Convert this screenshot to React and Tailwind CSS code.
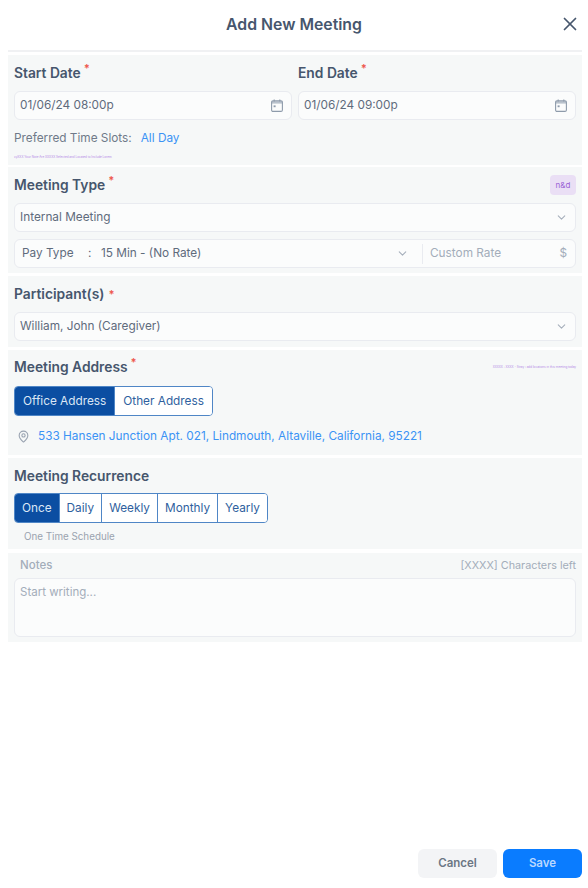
import React from 'react';
import { X, ChevronDown, MapPin } from 'lucide-react';

const font = { fontFamily: 'Inter, sans-serif' };

const Label = ({ children, dotClass = '-mt-px ml-[3px]' }) => (
  <div className="flex items-start text-[13.8px] leading-[18px] font-semibold text-[#46566d]">
    <span>{children}</span>
    <span className={`text-[11px] font-bold text-[#ee5a50] leading-none ${dotClass}`}>*</span>
  </div>
);

const CalendarIcon = () => (
  <svg width="12" height="13" viewBox="0 0 12 13" fill="none" className="text-[#8e9bab]">
    <rect x="0.6" y="1.8" width="10.8" height="10.6" rx="1.4" stroke="currentColor" strokeWidth="1.1" />
    <rect x="0.6" y="2" width="10.8" height="2.6" fill="currentColor" opacity="0.6" />
    <path d="M3.2 0.4v2M8.8 0.4v2" stroke="currentColor" strokeWidth="1.1" />
    <rect x="2.6" y="6.4" width="2" height="1.8" fill="currentColor" />
  </svg>
);

const DateInput = ({ value }) => (
  <div className="h-[29px] flex items-center justify-between pl-[5px] pr-[8px] bg-[#fbfcfc] border border-[#e9ebf0] rounded-md text-[11.8px] text-[#5f6b7c]">
    <span className="pt-px">{value}</span>
    <CalendarIcon />
  </div>
);

const SelectBox = ({ value }) => (
  <div className="h-[29px] flex items-center justify-between pl-[5px] pr-[7px] bg-[#fbfcfc] border border-[#e9ebf0] rounded-md text-[11.8px] text-[#5f6b7c]">
    <span className="pt-px">{value}</span>
    <ChevronDown size={13} className="text-[#a6afbb]" />
  </div>
);

const Segments = ({ items, padClass = 'px-[7px]' }) => (
  <div className="flex w-fit h-[30px] border border-[#4f86c6] rounded-[4px] overflow-hidden text-[11.8px]">
    {items.map((item, i) => (
      <div
        key={item}
        className={`flex items-center pt-px ${padClass} ${i === 0 ? 'bg-[#0b4ea2] text-[#dbe7f6]' : 'bg-white text-[#2f5f9e] border-l border-[#4f86c6]'}`}
      >
        {item}
      </div>
    ))}
  </div>
);

export default function App() {
  return (
    <div className="h-[888px] w-[588px] flex flex-col bg-white" style={font}>
      <div className="h-[50px] flex items-center justify-center relative shrink-0">
        <h1 className="text-[15.8px] font-semibold text-[#46566d]">Add New Meeting</h1>
        <X size={22} strokeWidth={1.9} className="absolute right-[7px] top-[13px] text-[#46566d]" />
      </div>
      <div className="ml-2 mr-[6px] h-[2px] bg-[#f0f1f3] shrink-0" />

      <div className="ml-2 mr-[6px] mt-[3px] flex flex-col gap-[2px]">
        {/* dates */}
        <section className="h-[110px] bg-[#f6f8f8] px-[6px] pt-[9px]">
          <div className="flex gap-[6px]">
            <div className="flex-1 flex flex-col gap-[9px]">
              <Label>Start Date</Label>
              <DateInput value="01/06/24 08:00p" />
            </div>
            <div className="flex-1 flex flex-col gap-[9px]">
              <Label>End Date</Label>
              <DateInput value="01/06/24 09:00p" />
            </div>
          </div>
          <div className="mt-[10px] flex gap-[9px] text-[11.8px] leading-[16px]">
            <span className="text-[#6f7a89]">Preferred Time Slots:</span>
            <span className="text-[#3b93f5]">All Day</span>
          </div>
          <div className="mt-[9px] text-[3px] leading-[4px] text-[#b58ae6]">
            xyXXX Your Note Are XXXXX Selected and Located to Include Lorem
          </div>
        </section>

        {/* type */}
        <section className="h-[106px] bg-[#f6f8f8] px-[6px] pt-[8px]">
          <div className="flex items-center justify-between h-[20px]">
            <Label>Meeting Type</Label>
            <div className="w-[26px] h-[20px] flex items-center justify-center rounded bg-[#eadff5] text-[8px] text-[#9a5fd6]">
              n&amp;d
            </div>
          </div>
          <div className="mt-[8px] flex flex-col gap-[7px]">
            <SelectBox value="Internal Meeting" />
            <div className="h-[29px] flex items-center bg-[#fbfcfc] border border-[#e9ebf0] rounded-md text-[11.8px] text-[#5f6b7c]">
              <div className="w-[407px] flex items-center justify-between pl-[7px] pr-[13px]">
                <div className="flex pt-px">
                  <span className="w-[66px]">Pay Type</span>
                  <span className="w-[13px]">:</span>
                  <span>15 Min - (No Rate)</span>
                </div>
                <ChevronDown size={13} className="text-[#a6afbb]" />
              </div>
              <div className="flex-1 h-[20px] flex items-center justify-between border-l border-[#e9ebf0] pl-[7px] pr-[8px] text-[#a3adba]">
                <span className="pt-px">Custom Rate</span>
                <span className="pt-px">$</span>
              </div>
            </div>
          </div>
        </section>

        {/* participants */}
        <section className="h-[71px] bg-[#f6f8f8] px-[6px] pt-[9px] mt-[1px]">
          <Label dotClass="ml-[4px] mt-[4px]">Participant(s)</Label>
          <div className="mt-[9px]">
            <SelectBox value="William, John (Caregiver)" />
          </div>
        </section>

        {/* address */}
        <section className="h-[105px] bg-[#f6f8f8] px-[6px] pt-[8px] mt-[1px]">
          <div className="flex items-start justify-between">
            <Label>Meeting Address</Label>
            <div className="mt-[7px] text-[3px] leading-[4px] text-[#b58ae6]">
              XXXXX : XXXX - Stray ; add locations in this meeting today
            </div>
          </div>
          <div className="mt-[10px]">
            <Segments items={['Office Address', 'Other Address']} padClass="px-[8px]" />
          </div>
          <div className="mt-[11px] flex items-center gap-[8px] pl-[3px] text-[11.8px] text-[#3b93f5]">
            <MapPin size={13} className="text-[#98a2b0]" />
            <span className="pt-px">533 Hansen Junction Apt. 021, Lindmouth, Altaville, California, 95221</span>
          </div>
        </section>

        {/* recurrence */}
        <section className="h-[91px] bg-[#f6f8f8] px-[6px] pt-[9px] mt-[1px]">
          <div className="text-[13.8px] leading-[18px] font-semibold text-[#46566d]">Meeting Recurrence</div>
          <div className="mt-[8px]">
            <Segments items={['Once', 'Daily', 'Weekly', 'Monthly', 'Yearly']} />
          </div>
          <div className="mt-[7px] pl-[10px] text-[9.8px] leading-[14px] text-[#9aa3af]">One Time Schedule</div>
        </section>

        {/* notes */}
        <section className="h-[89px] mt-[2px] bg-[#f6f8f8] px-[6px] pt-[5px]">
          <div className="flex items-center justify-between pl-[6px] h-[16px] text-[10.8px] text-[#a3adba]">
            <span className="font-medium text-[11.5px]">Notes</span>
            <span>[XXXX] Characters left</span>
          </div>
          <div className="mt-[4px] h-[59px] bg-[#fbfcfc] border border-[#e9ebf0] rounded-md px-[5px] py-[5px] text-[11.5px] leading-[16px] text-[#a3adba]">
            Start writing...
          </div>
        </section>
      </div>

      <div className="mt-auto mb-[10px] mr-[6px] flex justify-end gap-[6px]">
        <button className="w-[79px] h-[29px] rounded-md bg-[#f3f4f6] text-[11.5px] font-semibold text-[#6b7684]">Cancel</button>
        <button className="w-[79px] h-[29px] rounded-md bg-[#0a7cff] text-[11.5px] font-semibold text-[#b9d8ff]">Save</button>
      </div>
    </div>
  );
}
